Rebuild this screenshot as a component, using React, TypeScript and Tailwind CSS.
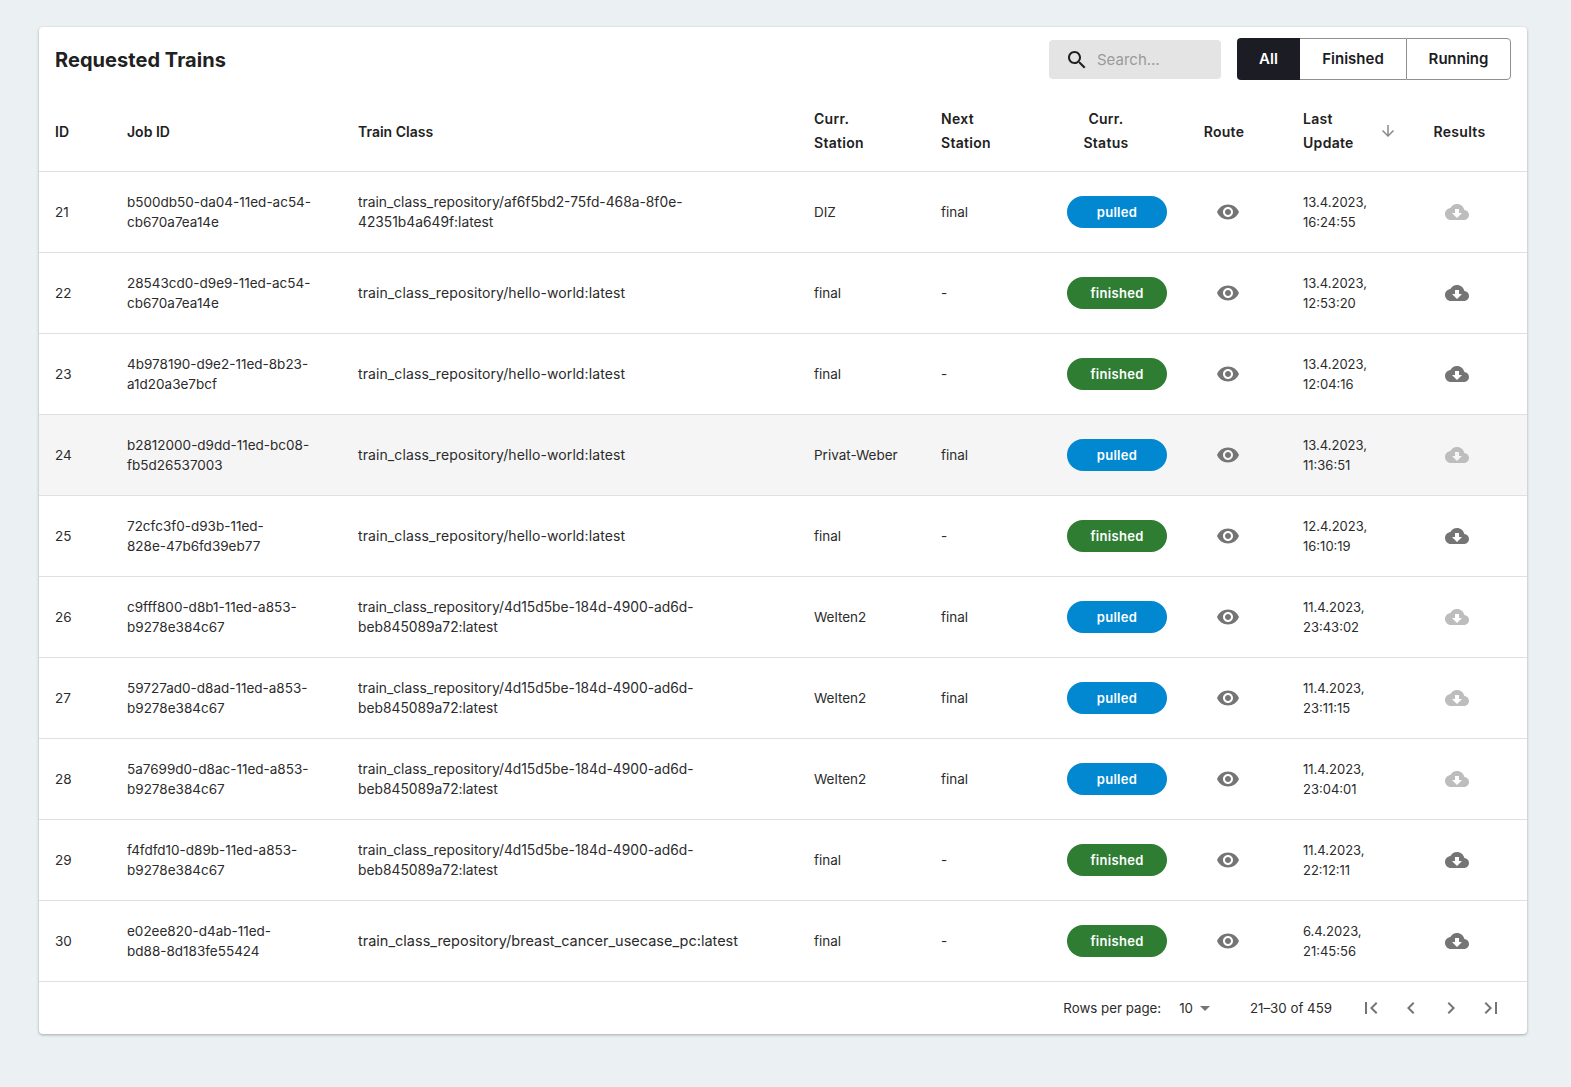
import React from "react";

const P = {
  eye: "M12 4.5C7 4.5 2.73 7.61 1 12c1.73 4.39 6 7.5 11 7.5s9.27-3.11 11-7.5c-1.73-4.39-6-7.5-11-7.5zM12 17c-2.76 0-5-2.24-5-5s2.24-5 5-5 5 2.24 5 5-2.24 5-5 5zm0-8c-1.66 0-3 1.34-3 3s1.34 3 3 3 3-1.34 3-3-1.34-3-3-3z",
  cloud: "M19.35 10.04C18.67 6.59 15.64 4 12 4 9.11 4 6.6 5.64 5.35 8.04 2.34 8.36 0 10.91 0 14c0 3.31 2.69 6 6 6h13c2.76 0 5-2.24 5-5 0-2.64-2.05-4.78-4.65-4.96zM17 13l-5 5-5-5h3V9h4v4h3z",
  search: "M15.5 14h-.79l-.28-.27C15.41 12.59 16 11.11 16 9.5 16 5.91 13.09 3 9.5 3S3 5.91 3 9.5 5.91 16 9.5 16c1.61 0 3.09-.59 4.23-1.57l.27.28v.79l5 4.99L20.49 19l-4.99-5zm-6 0C7.01 14 5 11.99 5 9.5S7.01 5 9.5 5 14 7.01 14 9.5 11.99 14 9.5 14z",
  first: "M18.41 16.59L13.82 12l4.59-4.59L17 6l-6 6 6 6zM6 6h2v12H6z",
  last: "M5.59 7.41L10.18 12l-4.59 4.59L7 18l6-6-6-6zM16 6h2v12h-2z",
  left: "M15.41 16.59L10.83 12l4.58-4.59L14 6l-6 6 6 6 1.41-1.41z",
  right: "M8.59 16.59L13.17 12 8.59 7.41 10 6l6 6-6 6-1.41-1.41z",
  down: "M20 12l-1.41-1.41L13 16.17V4h-2v12.17l-5.58-5.59L4 12l8 8 8-8z",
  drop: "M7 10l5 5 5-5z",
};

function Icon({ d, className }: { d: string; className?: string }) {
  return (
    <svg viewBox="0 0 24 24" fill="currentColor" className={className}>
      <path d={d} />
    </svg>
  );
}

type Row = [number, string, string, string, string, string, string, string, string];
const H = "train_class_repository/hello-world:latest";
const W = "train_class_repository/4d15d5be-184d-4900-ad6d-beb845089a72:latest";
const rows: Row[] = [
  [21, "b500db50-da04-11ed-ac54-cb670a7ea14e", "train_class_repository/af6f5bd2-75fd-468a-8f0e-42351b4a649f:latest", "DIZ", "final", "pulled", "13.4.2023,", "16:24:55", ""],
  [22, "28543cd0-d9e9-11ed-ac54-cb670a7ea14e", H, "final", "-", "finished", "13.4.2023,", "12:53:20", ""],
  [23, "4b978190-d9e2-11ed-8b23-a1d20a3e7bcf", H, "final", "-", "finished", "13.4.2023,", "12:04:16", ""],
  [24, "b2812000-d9dd-11ed-bc08-fb5d26537003", H, "Privat-Weber", "final", "pulled", "13.4.2023,", "11:36:51", "hover"],
  [25, "72cfc3f0-d93b-11ed-828e-47b6fd39eb77", H, "final", "-", "finished", "12.4.2023,", "16:10:19", ""],
  [26, "c9fff800-d8b1-11ed-a853-b9278e384c67", W, "Welten2", "final", "pulled", "11.4.2023,", "23:43:02", ""],
  [27, "59727ad0-d8ad-11ed-a853-b9278e384c67", W, "Welten2", "final", "pulled", "11.4.2023,", "23:11:15", ""],
  [28, "5a7699d0-d8ac-11ed-a853-b9278e384c67", W, "Welten2", "final", "pulled", "11.4.2023,", "23:04:01", ""],
  [29, "f4fdfd10-d89b-11ed-a853-b9278e384c67", W, "final", "-", "finished", "11.4.2023,", "22:12:11", ""],
  [30, "e02ee820-d4ab-11ed-bd88-8d183fe55424", "train_class_repository/breast_cancer_usecase_pc:latest", "final", "-", "finished", "6.4.2023,", "21:45:56", ""],
];

function Head({ lines, spacer }: { lines: string[]; spacer?: string }) {
  return (
    <span className="inline-flex items-center justify-center tracking-[0.3px]">
      <span className="inline-block">
        {lines.map((l) => (
          <span key={l} className="block">{l}</span>
        ))}
      </span>
      {spacer && <span className={`inline-block ${spacer}`} />}
    </span>
  );
}

function JobId({ v }: { v: string }) {
  const splits: Record<string, number> = { "72cfc3f0": 3, e02ee820: 3 };
  const parts = v.split("-");
  const n = splits[parts[0]] ?? 4;
  return (
    <>
      <span className="block whitespace-nowrap">{parts.slice(0, n).join("-")}-</span>
      <span className="block whitespace-nowrap">{parts.slice(n).join("-")}</span>
    </>
  );
}

function TrainClass({ v }: { v: string }) {
  const parts = v.split("-");
  if (parts.length < 5) {
    return (
      <span className={`whitespace-nowrap ${v === H ? "text-[14px] tracking-[0.1px]" : "text-[14.5px]"}`}>{v}</span>
    );
  }
  return (
    <div className="text-[13.8px]">
      <span className="block whitespace-nowrap">{parts.slice(0, 4).join("-")}-</span>
      <span className="block whitespace-nowrap">{parts.slice(4).join("-")}</span>
    </div>
  );
}

export default function App() {
  return (
    <div className="min-h-[1087px] bg-[#ebf0f3] pt-[27px] pl-[39px] text-[#1c1c1e] [font-family:Inter,'Noto_Sans',sans-serif]">
      <div className="w-[1488px] overflow-hidden rounded bg-white shadow-[0_1px_3px_rgba(0,0,0,0.3)]">
        <div className="flex h-[65px] items-center justify-between pl-4 pr-4">
          <h1 className="text-[20px] leading-8 font-bold tracking-[0.05px] text-[#212121]">Requested Trains</h1>
          <div className="flex items-center gap-4">
            <div className="flex h-[39px] w-[172px] items-center rounded bg-[#e4e4e4] pl-[16px]">
              <Icon d={P.search} className="h-6 w-6 text-[#212121]" />
              <span className="ml-2 pt-[2px] text-[15px] text-[#9a9a9a]">Search…</span>
            </div>
            <div className="mb-[2px] flex h-[42px] text-[15px] font-semibold">
              <div className="flex w-[63px] items-center justify-center rounded-l bg-[#1c1c24] pt-[2px] text-white">All</div>
              <div className="flex w-[106px] items-center justify-center border-y border-[#8f8f8f] pt-[2px] text-[#1c1c24]">Finished</div>
              <div className="flex w-[105px] items-center justify-center rounded-r border border-[#8f8f8f] pt-[2px] text-[#1c1c24]">Running</div>
            </div>
          </div>
        </div>
        <table className="w-full table-fixed border-collapse text-[13.5px] leading-5">
          <colgroup>
            <col className="w-[72px]" />
            <col className="w-[231px]" />
            <col className="w-[456px]" />
            <col className="w-[127px]" />
            <col className="w-[126px]" />
            <col className="w-[132px]" />
            <col className="w-[104px]" />
            <col className="w-[129px]" />
            <col className="w-[111px]" />
          </colgroup>
          <thead className="text-[14px] leading-6 text-[#212121]">
            <tr className="h-[79px] border-b border-[#e0e0e0]">
              <th className="px-4 pt-[2px] text-left font-semibold">ID</th>
              <th className="px-4 pt-[2px] text-left font-semibold">Job ID</th>
              <th className="px-4 pt-[2px] text-left font-semibold">Train Class</th>
              <th className="px-4 text-left font-semibold"><Head lines={["Curr.", "Station"]} /></th>
              <th className="px-4 text-left font-semibold"><Head lines={["Next", "Station"]} /></th>
              <th className="px-4 text-center font-semibold"><Head lines={["Curr.", "Status"]} spacer="w-[22px]" /></th>
              <th className="px-4 pt-[2px] text-center font-semibold"><Head lines={["Route"]} spacer="w-[22px]" /></th>
              <th className="px-4 text-left font-semibold">
                <div className="flex items-center tracking-[0.3px]">
                  <div className="w-[76px]"><span className="block">Last</span><span className="block">Update</span></div>
                  <Icon d={P.down} className="h-[18px] w-[18px] text-[#8a8a8a]" />
                </div>
              </th>
              <th className="px-4 pt-[2px] text-center font-semibold"><Head lines={["Results"]} spacer="w-[24px]" /></th>
            </tr>
          </thead>
          <tbody className="text-[#2b2b2b]">
            {rows.map((r) => (
              <tr key={r[0]} className={`h-[81px] border-b border-[#e0e0e0] ${r[8] ? "bg-[#f5f5f5]" : ""}`}>
                <td className="px-4">{r[0]}</td>
                <td className="px-4"><JobId v={r[1]} /></td>
                <td className="px-4"><TrainClass v={r[2]} /></td>
                <td className="px-4">{r[3]}</td>
                <td className="px-4">{r[4]}</td>
                <td className="px-4">
                  <div className={`flex h-8 w-[100px] items-center justify-center rounded-2xl text-[13px] font-semibold tracking-[0.3px] text-white ${r[5] === "pulled" ? "bg-[#0288d1]" : "bg-[#2e7d32]"}`}>
                    {r[5]}
                  </div>
                </td>
                <td className="pl-[33px]">
                  <Icon d={P.eye} className="h-6 w-6 text-[#757575]" />
                </td>
                <td className="px-4 text-[13px]">
                  <span className="block">{r[6]}</span>
                  <span className="block">{r[7]}</span>
                </td>
                <td className="pl-[29px]">
                  <Icon d={P.cloud} className={`h-6 w-6 ${r[5] === "pulled" ? "text-[#bdbdbd]" : "text-[#757575]"}`} />
                </td>
              </tr>
            ))}
          </tbody>
        </table>
        <div className="flex h-[52px] items-center justify-end text-[13.3px] text-[#2b2b2b]">
          <span className="pt-[2px]">Rows per page:</span>
          <span className="ml-[18px] pt-[2px]">10</span>
          <Icon d={P.drop} className="h-6 w-6 text-[#757575]" />
          <span className="ml-[33px] pt-[2px]">21–30 of 459</span>
          <div className="ml-[19px] mr-[16px] flex">
            {[P.first, P.left, P.right, P.last].map((d) => (
              <div key={d} className="flex h-10 w-10 items-center justify-center">
                <Icon d={d} className="h-6 w-6 text-[#757575]" />
              </div>
            ))}
          </div>
        </div>
      </div>
    </div>
  );
}
